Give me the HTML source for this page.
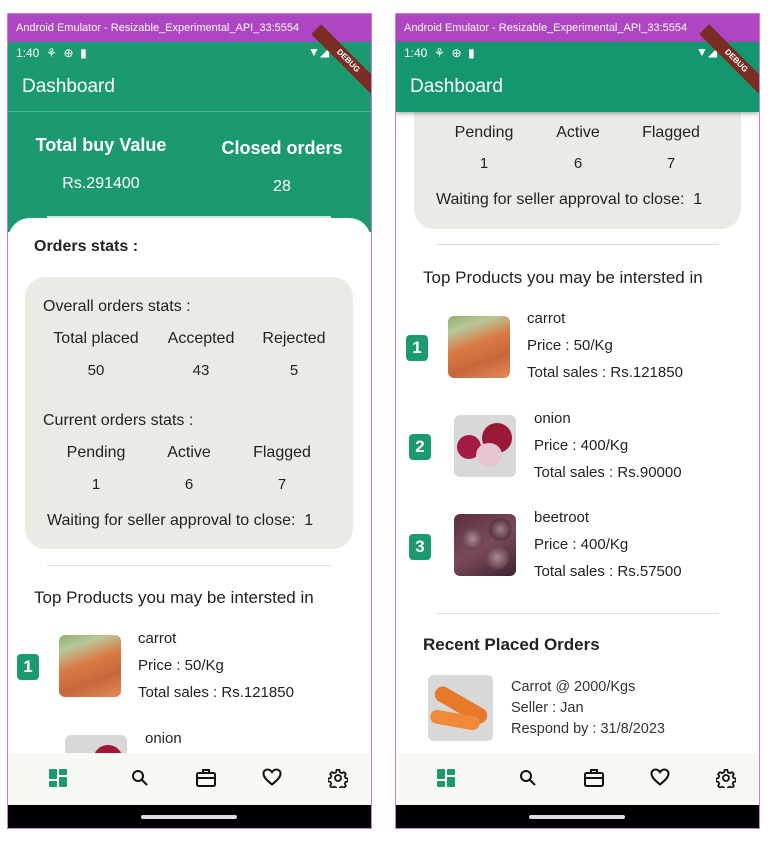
<!DOCTYPE html>
<html><head><meta charset="utf-8"><style>
*{margin:0;padding:0;box-sizing:border-box}
body{width:770px;height:844px;background:#fff;position:relative;overflow:hidden;font-family:"Liberation Sans",sans-serif;color:#222}
.a{position:absolute;white-space:nowrap;line-height:1}
.c{transform:translateX(-50%)}
.win{position:absolute;top:13px;width:365px;height:816px;border:1px solid #c77fd6;overflow:hidden;background:#fff}
.tb{position:absolute;left:0;top:0;width:100%;height:28px;background:#ae45c2;color:#fff;font-size:11px;padding:8px 0 0 8px}
.badge{position:absolute;width:22px;height:26px;background:#1b9a70;border-radius:4px;color:#fff;font-size:17px;font-weight:bold;text-align:center;line-height:26px}
.img{position:absolute;border-radius:6px;overflow:hidden}
.nav{position:absolute;left:0;top:739px;width:100%;height:52px;background:#f7f9f3}
.blk{position:absolute;left:0;top:791px;width:100%;height:25px;background:#000}
.pill{position:absolute;top:10px;left:133px;width:96px;height:4px;border-radius:2px;background:#ddd}
.ribbon{position:absolute;right:-22px;top:40px;width:90px;height:14px;background:#7a2d25;transform:rotate(45deg);color:#fff;font-size:8px;font-weight:bold;text-align:center;line-height:14px}
.t16{font-size:16px}
</style></head><body>

<!-- LEFT -->
<div class="win" style="left:7px">
 <div class="tb">Android Emulator - Resizable_Experimental_API_33:5554</div>
 <div style="position:absolute;left:0;top:28px;width:100%;height:190px;background:#1b9a70"></div>
 <div class="a" style="left:8px;top:33px;color:#fff;font-size:12px">1:40 &nbsp;⚘ &nbsp;⊕ &nbsp;▮</div>
 <div class="a" style="left:300px;top:32px;color:#fff;font-size:12px">▼◢</div>
 <div class="ribbon">DEBUG</div>
 <div class="a" style="left:14px;top:63px;color:#fff;font-size:19px">Dashboard</div>
 <div style="position:absolute;left:0;top:97px;width:100%;height:1px;background:#4fb392"></div>
 <div class="a c" style="left:93px;top:122px;color:#fff;font-size:18px;font-weight:bold">Total buy Value</div>
 <div class="a c" style="left:274px;top:125px;color:#fff;font-size:18px;font-weight:bold">Closed orders</div>
 <div class="a c" style="left:93px;top:162px;color:#fff;font-size:16px">Rs.291400</div>
 <div class="a c" style="left:274px;top:165px;color:#fff;font-size:16px">28</div>
 <div style="position:absolute;left:39px;top:202px;width:284px;height:2px;background:#cfe8dd"></div>
 <div style="position:absolute;left:0;top:204px;width:100%;height:600px;background:#fff;border-radius:22px 22px 0 0"></div>
 <div class="a t16" style="left:26px;top:225px;font-weight:bold;color:#222">Orders stats :</div>
 <div style="position:absolute;left:17px;top:263px;width:328px;height:272px;background:#ebebe5;border-radius:20px"></div>
 <div class="a t16" style="left:35px;top:285px">Overall orders stats :</div>
 <div class="a c t16" style="left:88px;top:317px">Total placed</div>
 <div class="a c t16" style="left:193px;top:317px">Accepted</div>
 <div class="a c t16" style="left:286px;top:317px">Rejected</div>
 <div class="a c" style="left:88px;top:349px;font-size:15px">50</div>
 <div class="a c" style="left:193px;top:349px;font-size:15px">43</div>
 <div class="a c" style="left:286px;top:349px;font-size:15px">5</div>
 <div class="a t16" style="left:35px;top:399px">Current orders stats :</div>
 <div class="a c t16" style="left:88px;top:431px">Pending</div>
 <div class="a c t16" style="left:181px;top:431px">Active</div>
 <div class="a c t16" style="left:274px;top:431px">Flagged</div>
 <div class="a c" style="left:88px;top:463px;font-size:15px">1</div>
 <div class="a c" style="left:181px;top:463px;font-size:15px">6</div>
 <div class="a c" style="left:274px;top:463px;font-size:15px">7</div>
 <div class="a t16" style="left:39px;top:499px">Waiting for seller approval to close: &nbsp;1</div>
 <div style="position:absolute;left:39px;top:551px;width:284px;height:1px;background:#ddd"></div>
 <div class="a" style="left:26px;top:575px;font-size:17px">Top Products you may be intersted in</div>
 <div class="badge" style="left:9px;top:640px">1</div>
 <div class="img" style="left:51px;top:621px;width:62px;height:62px;background:linear-gradient(160deg,#8fb06a 0%,#b9c79a 20%,#d97a45 45%,#c8663a 70%,#e08a5a 100%)"></div>
 <div class="a" style="left:130px;top:617px;font-size:15px">carrot</div>
 <div class="a" style="left:130px;top:644px;font-size:15px">Price : 50/Kg</div>
 <div class="a" style="left:130px;top:671px;font-size:15px">Total sales : Rs.121850</div>
 <div class="img" style="left:57px;top:721px;width:62px;height:62px;background:#d8d8d8"><div style="position:absolute;left:28px;top:10px;width:30px;height:30px;border-radius:50%;background:#a01838"></div></div>
 <div class="a" style="left:137px;top:717px;font-size:15px">onion</div>
 <div class="nav">
  <svg style="position:absolute;left:41px;top:16px" width="18" height="18" viewBox="0 0 18 18" fill="#1b9a70"><rect x="0" y="0" width="8" height="10" rx="1"/><rect x="10" y="0" width="8" height="6" rx="1"/><rect x="0" y="12" width="8" height="6" rx="1"/><rect x="10" y="8" width="8" height="10" rx="1"/></svg>
  <svg style="position:absolute;left:123px;top:16px" width="18" height="18" viewBox="0 0 18 18" fill="none" stroke="#111" stroke-width="2"><circle cx="7" cy="7" r="5"/><path d="M11 11l5 5"/></svg>
  <svg style="position:absolute;left:188px;top:15px" width="20" height="19" viewBox="0 0 20 19" fill="none" stroke="#111" stroke-width="2"><rect x="1" y="5" width="18" height="13" rx="1.5"/><path d="M7 5V2h6v3M1 10h18"/></svg>
  <svg style="position:absolute;left:254px;top:15px" width="20" height="18" viewBox="0 0 20 18" fill="none" stroke="#111" stroke-width="2"><path d="M10 16.5C4 11.5 1.5 9 1.5 5.5 1.5 3 3.5 1.5 5.5 1.5c2 0 3.5 1.2 4.5 2.7 1-1.5 2.5-2.7 4.5-2.7 2 0 4 1.5 4 4 0 3.5-2.5 6-8.5 11z"/></svg>
  <svg style="position:absolute;left:320px;top:15px" width="20" height="20" viewBox="0 0 20 20" fill="none" stroke="#111" stroke-width="1.8"><circle cx="10" cy="10" r="3"/><path d="M8.5 1.5h3l.5 2.5 2 1 2.3-1.2 2 2-1.2 2.3.9 2 2.5.5v3l-2.5.5-.9 2 1.2 2.3-2 2-2.3-1.2-2 .9-.5 2.4h-3l-.5-2.4-2-.9-2.3 1.2-2-2 1.2-2.3-.9-2-2.5-.5v-3l2.5-.5.9-2-1.2-2.3 2-2 2.3 1.2 2-1z" transform="scale(.95) translate(.5 .5)"/></svg>
 </div>
 <div class="blk"><div class="pill"></div></div>
</div>

<!-- RIGHT -->
<div class="win" style="left:395px">
 <div class="tb">Android Emulator - Resizable_Experimental_API_33:5554</div>
 <div style="position:absolute;left:18px;top:80px;width:327px;height:135px;background:#ebebe5;border-radius:0 0 20px 20px"></div>
 <div class="a c t16" style="left:88px;top:111px">Pending</div>
 <div class="a c t16" style="left:182px;top:111px">Active</div>
 <div class="a c t16" style="left:275px;top:111px">Flagged</div>
 <div class="a c" style="left:88px;top:142px;font-size:15px">1</div>
 <div class="a c" style="left:182px;top:142px;font-size:15px">6</div>
 <div class="a c" style="left:275px;top:142px;font-size:15px">7</div>
 <div class="a t16" style="left:40px;top:178px">Waiting for seller approval to close: &nbsp;1</div>
 <div style="position:absolute;left:40px;top:230px;width:283px;height:1px;background:#ddd"></div>
 <div class="a" style="left:27px;top:255px;font-size:17px">Top Products you may be intersted in</div>

 <div class="badge" style="left:10px;top:321px">1</div>
 <div class="img" style="left:52px;top:302px;width:62px;height:62px;background:linear-gradient(160deg,#8fb06a 0%,#b9c79a 20%,#d97a45 45%,#c8663a 70%,#e08a5a 100%)"></div>
 <div class="a" style="left:131px;top:297px;font-size:15px">carrot</div>
 <div class="a" style="left:131px;top:324px;font-size:15px">Price : 50/Kg</div>
 <div class="a" style="left:131px;top:351px;font-size:15px">Total sales : Rs.121850</div>

 <div class="badge" style="left:13px;top:420px">2</div>
 <div class="img" style="left:58px;top:401px;width:62px;height:62px;background:#d8d8d8">
  <div style="position:absolute;left:3px;top:20px;width:24px;height:24px;border-radius:50%;background:#a51a45"></div>
  <div style="position:absolute;left:28px;top:8px;width:30px;height:30px;border-radius:50%;background:#9a1838"></div>
  <div style="position:absolute;left:22px;top:28px;width:26px;height:24px;border-radius:50%;background:#e7c6d2"></div>
 </div>
 <div class="a" style="left:138px;top:397px;font-size:15px">onion</div>
 <div class="a" style="left:138px;top:424px;font-size:15px">Price : 400/Kg</div>
 <div class="a" style="left:138px;top:451px;font-size:15px">Total sales : Rs.90000</div>

 <div class="badge" style="left:13px;top:520px">3</div>
 <div class="img" style="left:58px;top:500px;width:62px;height:62px;background:radial-gradient(circle at 30% 40%,#a88a95 0,#6b4452 18%,transparent 20%),radial-gradient(circle at 70% 70%,#a88a95 0,#6b4452 18%,transparent 20%),radial-gradient(circle at 75% 25%,#9c7f8a 0,#5b3444 16%,transparent 18%),linear-gradient(150deg,#5a2f3e,#7b4a5c 50%,#3f2330)"></div>
 <div class="a" style="left:138px;top:496px;font-size:15px">beetroot</div>
 <div class="a" style="left:138px;top:523px;font-size:15px">Price : 400/Kg</div>
 <div class="a" style="left:138px;top:550px;font-size:15px">Total sales : Rs.57500</div>

 <div style="position:absolute;left:40px;top:599px;width:283px;height:1px;background:#ddd"></div>
 <div class="a" style="left:27px;top:622px;font-size:17px;font-weight:bold;color:#222">Recent Placed Orders</div>
 <div class="img" style="left:32px;top:661px;width:65px;height:66px;background:#d8d8d8"><div style="position:absolute;left:4px;top:22px;width:58px;height:16px;border-radius:8px;background:#e8782c;transform:rotate(30deg)"></div><div style="position:absolute;left:2px;top:38px;width:50px;height:14px;border-radius:7px;background:#f08a3a;transform:rotate(10deg)"></div></div>
 <div class="a" style="left:115px;top:666px;font-size:14.5px;color:#333">Carrot @ 2000/Kgs</div>
 <div class="a" style="left:115px;top:687px;font-size:14.5px;color:#333">Seller : Jan</div>
 <div class="a" style="left:115px;top:708px;font-size:14.5px;color:#333">Respond by : 31/8/2023</div>
 <div style="position:absolute;left:71px;top:739px;width:221px;height:1px;background:#ddd"></div>

 <div style="position:absolute;left:0;top:28px;width:100%;height:70px;background:#14966e;box-shadow:0 2px 4px rgba(0,0,0,.3)"></div>
 <div class="a" style="left:8px;top:33px;color:#fff;font-size:12px">1:40 &nbsp;⚘ &nbsp;⊕ &nbsp;▮</div>
 <div class="a" style="left:300px;top:32px;color:#fff;font-size:12px">▼◢</div>
 <div class="ribbon">DEBUG</div>
 <div class="a" style="left:14px;top:63px;color:#fff;font-size:19px">Dashboard</div>

 <div class="nav">
  <svg style="position:absolute;left:41px;top:16px" width="18" height="18" viewBox="0 0 18 18" fill="#1b9a70"><rect x="0" y="0" width="8" height="10" rx="1"/><rect x="10" y="0" width="8" height="6" rx="1"/><rect x="0" y="12" width="8" height="6" rx="1"/><rect x="10" y="8" width="8" height="10" rx="1"/></svg>
  <svg style="position:absolute;left:123px;top:16px" width="18" height="18" viewBox="0 0 18 18" fill="none" stroke="#111" stroke-width="2"><circle cx="7" cy="7" r="5"/><path d="M11 11l5 5"/></svg>
  <svg style="position:absolute;left:188px;top:15px" width="20" height="19" viewBox="0 0 20 19" fill="none" stroke="#111" stroke-width="2"><rect x="1" y="5" width="18" height="13" rx="1.5"/><path d="M7 5V2h6v3M1 10h18"/></svg>
  <svg style="position:absolute;left:254px;top:15px" width="20" height="18" viewBox="0 0 20 18" fill="none" stroke="#111" stroke-width="2"><path d="M10 16.5C4 11.5 1.5 9 1.5 5.5 1.5 3 3.5 1.5 5.5 1.5c2 0 3.5 1.2 4.5 2.7 1-1.5 2.5-2.7 4.5-2.7 2 0 4 1.5 4 4 0 3.5-2.5 6-8.5 11z"/></svg>
  <svg style="position:absolute;left:320px;top:15px" width="20" height="20" viewBox="0 0 20 20" fill="none" stroke="#111" stroke-width="1.8"><circle cx="10" cy="10" r="3"/><path d="M8.5 1.5h3l.5 2.5 2 1 2.3-1.2 2 2-1.2 2.3.9 2 2.5.5v3l-2.5.5-.9 2 1.2 2.3-2 2-2.3-1.2-2 .9-.5 2.4h-3l-.5-2.4-2-.9-2.3 1.2-2-2 1.2-2.3-.9-2-2.5-.5v-3l2.5-.5.9-2-1.2-2.3 2-2 2.3 1.2 2-1z" transform="scale(.95) translate(.5 .5)"/></svg>
 </div>
 <div class="blk"><div class="pill"></div></div>
</div>
</body></html>
